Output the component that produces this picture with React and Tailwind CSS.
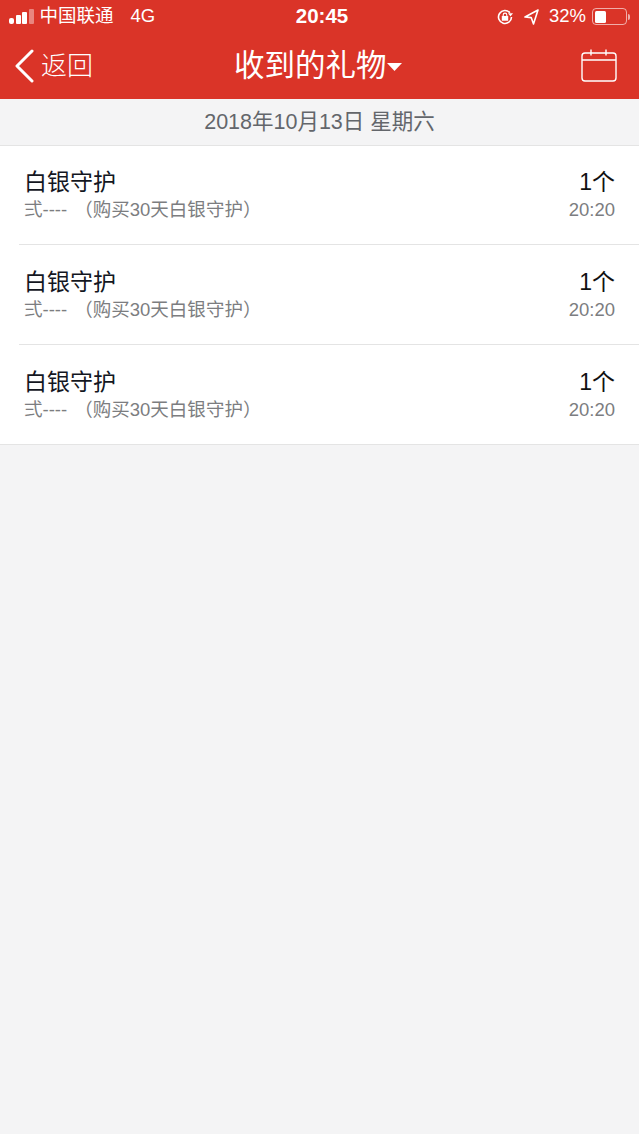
import { Fragment } from 'react';

const FONT = "font-['Liberation_Sans','Noto_Sans_CJK_SC',sans-serif]";

const rows = [1, 2, 3];

function StatusBar() {
  return (
    <div className="flex h-[33px] items-center justify-between pl-[9px] pr-[9px] text-white">
      <div className="flex w-[200px] items-center">
        <div className="mb-[2px] flex h-[16px] items-end gap-[1.5px]">
          <span className="h-[6px] w-[5px] rounded-[2px] bg-white" />
          <span className="h-[9px] w-[5px] rounded-[1px] bg-white" />
          <span className="h-[12px] w-[5px] rounded-[1px] bg-white" />
          <span className="h-[15px] w-[5px] rounded-[1px] bg-white/40" />
        </div>
        <span className="ml-[6px] text-[18.5px] leading-none">中国联通</span>
        <span className="ml-[17px] text-[18.5px] leading-none">4G</span>
      </div>
      <div className="ml-[5px] text-[20.5px] font-bold leading-none">20:45</div>
      <div className="flex w-[200px] items-center justify-end">
        <svg width="18" height="18" viewBox="0 0 18 18" fill="none" stroke="white" strokeWidth="1.6">
          <path d="M15.5 9a6.5 6.5 0 1 1-1.6-4.3" />
          <path d="M17 5.2h-5l2.5 3.4z" fill="white" stroke="none" />
          <rect x="5.8" y="8" width="6.4" height="4.8" rx="0.6" fill="white" stroke="none" />
          <path d="M7.2 8V6.9a1.8 1.8 0 0 1 3.6 0V8" strokeWidth="1.1" />
        </svg>
        <svg className="ml-[10px]" width="15" height="16" viewBox="0 0 15 16" fill="none" stroke="white" strokeWidth="1.6" strokeLinejoin="round">
          <path d="M14 1 1 8l6.2.6L9.5 15z" />
        </svg>
        <span className="ml-[10px] text-[18.5px] leading-none">32%</span>
        <div className="ml-[6px] flex h-[17px] w-[35px] items-center rounded-[4px] border border-white/60 p-[1.5px]">
          <div className="h-full w-[11px] rounded-[1.5px] bg-white" />
        </div>
        <div className="ml-[1px] h-[6px] w-[2px] rounded-r-[2px] bg-white/60" />
      </div>
    </div>
  );
}

function NavBar() {
  return (
    <div className="relative flex h-[66px] items-center justify-between pb-[1px] pl-[15px] pr-[22px] text-white">
      <div className="flex items-center">
        <svg width="20" height="34" viewBox="0 0 20 34" fill="none" stroke="white" strokeWidth="3" strokeLinecap="round" strokeLinejoin="round">
          <path d="M17 2 2 17l15 15" />
        </svg>
        <span className="ml-[6px] text-[26px] font-light leading-none">返回</span>
      </div>
      <div className="absolute left-[234px] top-[14px] flex items-center">
        <span className="text-[30.5px] font-normal leading-[36px]">收到的礼物</span>
        <svg className="mt-[4px]" width="15" height="8" viewBox="0 0 15 8" fill="white">
          <path d="M0 0h15L7.5 8z" />
        </svg>
      </div>
      <svg width="36" height="33" viewBox="0 0 36 33" fill="none" stroke="white" strokeWidth="1.4">
        <rect x="1" y="4" width="34" height="28" rx="3" />
        <path d="M1 11h34M10 0.5v6M25 0.5v6" />
      </svg>
    </div>
  );
}

function GiftRow({ first, inset }) {
  return (
    <Fragment>
      <div className={`flex items-start justify-between px-[24px] ${first ? 'h-[98px] pt-[23px]' : 'h-[99px] pt-[24px]'}`}>
        <div>
          <div className="text-[23px] leading-[26px] text-[#14171f]">白银守护</div>
          <div className="mt-[2px] text-[18.5px] leading-[26px] text-[#7c7d80]">
            弍----&nbsp;<span className="ml-[2px]">（购买30天白银守护）</span>
          </div>
        </div>
        <div className="flex flex-col items-end">
          <div className="text-[23px] leading-[26px] text-[#111]">1个</div>
          <div className="mt-[2px] text-[18.5px] leading-[26px] text-[#7c7d80]">20:20</div>
        </div>
      </div>
      <div className={`h-px bg-[#e4e4e4] ${inset ? 'ml-[19px]' : ''}`} />
    </Fragment>
  );
}

export default function App() {
  return (
    <div className={`flex min-h-[1134px] flex-col bg-[#f4f4f5] ${FONT}`}>
      <div className="bg-[#da3428]">
        <StatusBar />
        <NavBar />
      </div>
      <div className="flex h-[47px] items-center justify-center border-b border-[#e4e4e4] text-[21.5px] text-[#63666b]">
        2018年10月13日 星期六
      </div>
      <div className="bg-white">
        {rows.map((r) => (
          <GiftRow key={r} first={r === 1} inset={r < 3} />
        ))}
      </div>
    </div>
  );
}
